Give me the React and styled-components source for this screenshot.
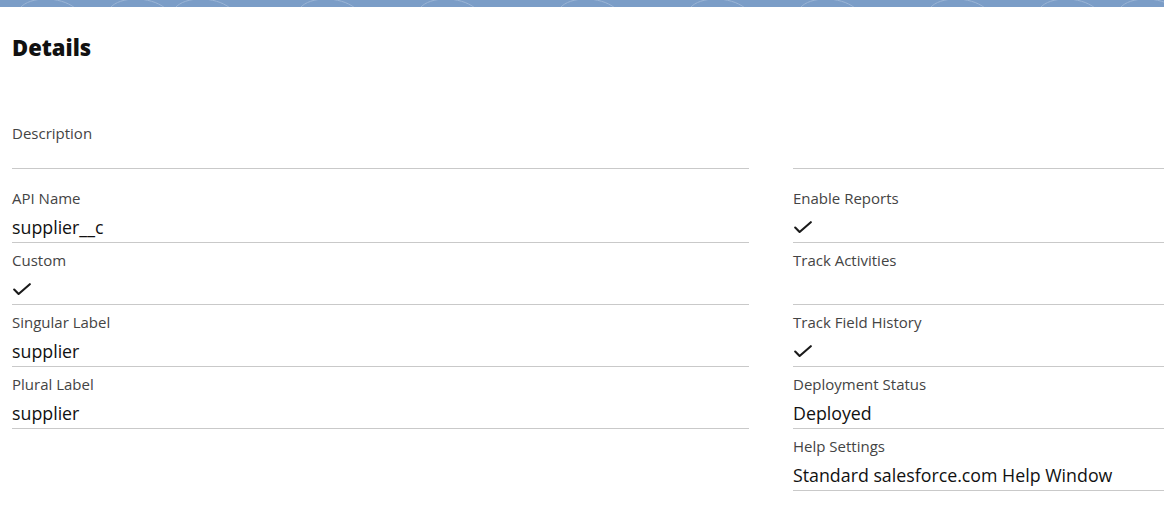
import React from "react";
import styled, { createGlobalStyle } from "styled-components";

const Global = createGlobalStyle`
  html, body {
    margin: 0;
    padding: 0;
    background: #fff;
    font-family: "Open Sans", "Noto Sans", "Liberation Sans", sans-serif;
    overflow: hidden;
  }
`;

const Page = styled.div`
  width: 1164px;
  height: 522px;
  overflow: hidden;
  background: #fff;
`;

const Band = styled.div`
  height: 7px;
  background: #7b9dc7;
  overflow: hidden;

  svg {
    display: block;
  }
`;

const Body = styled.div`
  padding: 0 0 0 12px;
`;

const Title = styled.h2`
  margin: 0;
  padding-top: 24px;
  height: 32px;
  font-size: 22px;
  line-height: 32px;
  font-weight: 800;
  color: #111;
`;

const Grid = styled.div`
  display: grid;
  grid-template-columns: 737px 371px;
  column-gap: 44px;
  margin-top: 53px;
`;

const Column = styled.div`
  display: flex;
  flex-direction: column;
`;

const Field = styled.div`
  display: flex;
  flex-direction: column;
  gap: 6px;
  padding: 7px 0 2px;
  border-bottom: 1px solid #c9c9c9;
  margin-bottom: ${(p) => (p.$first ? "12px" : "0")};
`;

const Label = styled.div`
  height: 20px;
  font-size: 15px;
  line-height: 20px;
  color: #444;
  white-space: nowrap;
`;

const Value = styled.div`
  height: ${(p) => (p.$short ? "17px" : "26px")};
  font-size: 17.8px;
  line-height: 26px;
  color: #111;
  white-space: nowrap;
  display: flex;
  align-items: center;
  padding-left: ${(p) => (p.$check ? "1px" : "0")};
`;

const Check = () => (
  <svg width="18" height="13" viewBox="0 0 18 13">
    <polyline
      points="1.2,6.6 5.6,11 16.8,1.2"
      fill="none"
      stroke="#1a1a1a"
      strokeWidth="2.1"
      strokeLinecap="round"
      strokeLinejoin="round"
    />
  </svg>
);

const Swirls = () => (
  <svg width="1164" height="7" viewBox="0 0 1164 7">
    <g fill="none" stroke="#9bb5d6" strokeWidth="1">
      {[20, 110, 175, 300, 420, 560, 690, 800, 930, 1040, 1120].map((x, i) => (
        <path key={i} d={`M${x} 8 C${x + 10} -4 ${x + 40} -4 ${x + 55} 8`} />
      ))}
    </g>
  </svg>
);

const left = [
  { label: "Description", value: "" },
  { label: "API Name", value: "supplier__c" },
  { label: "Custom", check: true },
  { label: "Singular Label", value: "supplier" },
  { label: "Plural Label", value: "supplier" },
];

const right = [
  { label: "", value: "" },
  { label: "Enable Reports", check: true },
  { label: "Track Activities", value: "" },
  { label: "Track Field History", check: true },
  { label: "Deployment Status", value: "Deployed" },
  { label: "Help Settings", value: "Standard salesforce.com Help Window" },
];

const renderFields = (items) =>
  items.map((f, i) => (
    <Field key={i} $first={i === 0}>
      <Label>{f.label}</Label>
      <Value $short={i === 0} $check={f.check}>
        {f.check ? <Check /> : f.value}
      </Value>
    </Field>
  ));

export default function App() {
  return (
    <Page>
      <Global />
      <Band>
        <Swirls />
      </Band>
      <Body>
        <Title>Details</Title>
        <Grid>
          <Column>{renderFields(left)}</Column>
          <Column>{renderFields(right)}</Column>
        </Grid>
      </Body>
    </Page>
  );
}
